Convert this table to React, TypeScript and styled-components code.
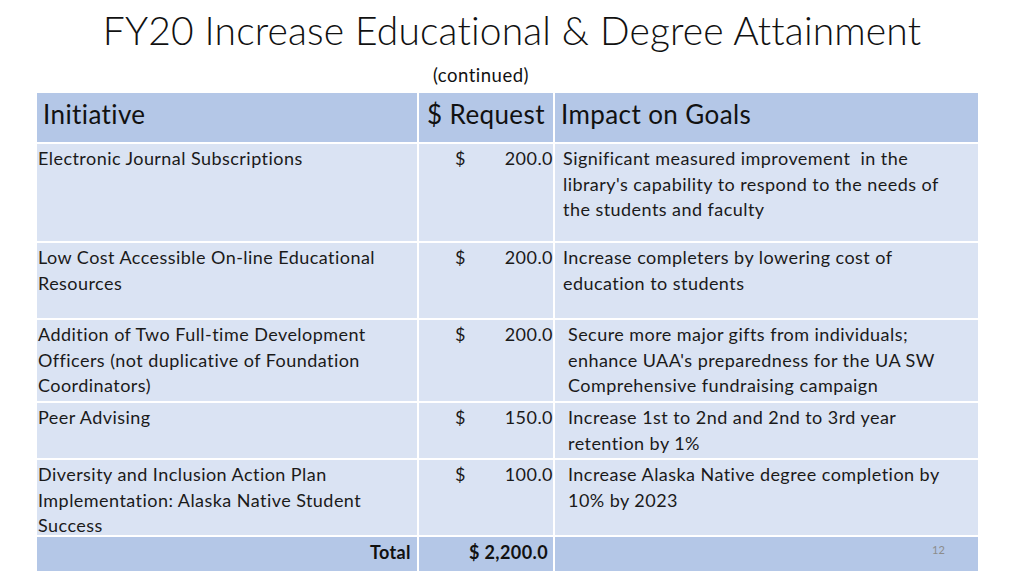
import React from "react";
import styled, { createGlobalStyle } from "styled-components";

const Global = createGlobalStyle`
  html, body { margin: 0; padding: 0; background: #ffffff; }
  body {
    font-family: Lato, "Open Sans", sans-serif;
    color: #1a1a1a;
    font-variant-ligatures: none;
    font-feature-settings: "liga" 0, "clig" 0;
  }
`;

const Slide = styled.div`
  position: relative;
  width: 1024px;
  height: 576px;
  overflow: hidden;
  display: flex;
  flex-direction: column;
  align-items: center;
`;

const Title = styled.h1`
  margin: 5px 0 0 0;
  font-family: Lato, sans-serif;
  font-weight: 300;
  font-size: 39px;
  letter-spacing: 0.15px;
  line-height: 50px;
  color: #111;
  text-align: center;
  white-space: nowrap;
`;

const Subtitle = styled.div`
  margin: 10px 0 0 -62px;
  font-size: 18.5px;
  letter-spacing: 0.5px;
  line-height: 20px;
  color: #111;
`;

const Table = styled.div`
  margin: 8px 0 0 -9px;
  display: grid;
  grid-template-columns: 380px 134px 423px;
  grid-template-rows: 49px 97px 75px 81px 55px 75px 34px;
  gap: 2px;
  background: #ffffff;
`;

const HeadCell = styled.div<{ $pad: number }>`
  background: #b4c7e7;
  display: flex;
  align-items: center;
  padding: 0 0 7px ${(p) => p.$pad}px;
  font-size: 26px;
  letter-spacing: 0.4px;
  color: #111;
  white-space: nowrap;
`;

const Cell = styled.div<{ $pad?: number }>`
  background: #dae3f3;
  padding: 2px 0 0 ${(p) => p.$pad ?? 1}px;
  font-size: 18px;
  letter-spacing: 0.45px;
  line-height: 25.5px;
  color: #1a1a1a;
  white-space: pre;
`;

const Line = styled.span`
  display: block;
`;

const MoneyCell = styled.div`
  background: #dae3f3;
  padding: 2px 0 0 36px;
  display: flex;
  justify-content: space-between;
  font-size: 18px;
  letter-spacing: 0.45px;
  line-height: 25.5px;
  color: #1a1a1a;
`;

const TotalCell = styled.div<{ $pad?: number }>`
  background: #b4c7e7;
  display: flex;
  align-items: center;
  justify-content: flex-end;
  padding: 0 ${(p) => p.$pad ?? 0}px 4px 0;
  font-size: 18px;
  letter-spacing: 0.4px;
  font-weight: 700;
  color: #111;
`;

const SlideNumber = styled.div`
  position: absolute;
  left: 932px;
  top: 543px;
  font-size: 11px;
  color: #8c8c8c;
`;

type Row = { initiative: string[]; amount: string; impact: string[]; indent: number };

const rows: Row[] = [
  {
    initiative: ["Electronic Journal Subscriptions"],
    amount: "200.0",
    impact: [
      "Significant measured improvement  in the",
      "library's capability to respond to the needs of",
      "the students and faculty",
    ],
    indent: 8,
  },
  {
    initiative: ["Low Cost Accessible On-line Educational", "Resources"],
    amount: "200.0",
    impact: ["Increase completers by lowering cost of", "education to students"],
    indent: 8,
  },
  {
    initiative: [
      "Addition of Two Full-time Development",
      "Officers (not duplicative of Foundation",
      "Coordinators)",
    ],
    amount: "200.0",
    impact: [
      "Secure more major gifts from individuals;",
      "enhance UAA's preparedness for the UA SW",
      "Comprehensive fundraising campaign",
    ],
    indent: 13,
  },
  {
    initiative: ["Peer Advising"],
    amount: "150.0",
    impact: ["Increase 1st to 2nd and 2nd to 3rd year", "retention by 1%"],
    indent: 13,
  },
  {
    initiative: [
      "Diversity and Inclusion Action Plan",
      "Implementation: Alaska Native Student",
      "Success",
    ],
    amount: "100.0",
    impact: ["Increase Alaska Native degree completion by", "10% by 2023"],
    indent: 13,
  },
];

export default function App() {
  return (
    <Slide>
      <Global />
      <Title>FY20 Increase Educational &amp; Degree Attainment</Title>
      <Subtitle>(continued)</Subtitle>
      <Table>
        <HeadCell $pad={6}>Initiative</HeadCell>
        <HeadCell $pad={8}>$ Request</HeadCell>
        <HeadCell $pad={6}>Impact on Goals</HeadCell>
        {rows.map((r) => (
          <React.Fragment key={r.initiative[0]}>
            <Cell>
              {r.initiative.map((l) => (
                <Line key={l}>{l}</Line>
              ))}
            </Cell>
            <MoneyCell>
              <span>$</span>
              <span>{r.amount}</span>
            </MoneyCell>
            <Cell $pad={r.indent}>
              {r.impact.map((l) => (
                <Line key={l}>{l}</Line>
              ))}
            </Cell>
          </React.Fragment>
        ))}
        <TotalCell $pad={6}>Total</TotalCell>
        <TotalCell $pad={5}>$ 2,200.0</TotalCell>
        <TotalCell />
      </Table>
      <SlideNumber>12</SlideNumber>
    </Slide>
  );
}
